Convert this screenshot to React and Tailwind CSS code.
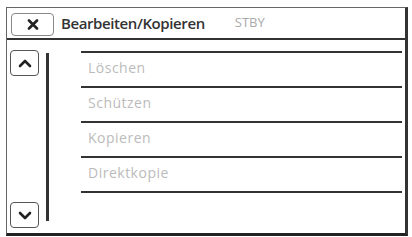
import React from 'react';

const items = ['Löschen', 'Schützen', 'Kopieren', 'Direktkopie'];

const ArrowButton = ({ dir }) => (
  <div className="w-[29px] h-[26px] border-[1.5px] border-[#555] rounded-[4px] flex items-center justify-center">
    <svg width="14" height="9" viewBox="0 0 14 9">
      <path
        d={dir === 'up' ? 'M2 7 L7 2 L12 7' : 'M2 2 L7 7 L12 2'}
        fill="none"
        stroke="#222"
        strokeWidth="2.6"
        strokeLinecap="round"
        strokeLinejoin="round"
      />
    </svg>
  </div>
);

const App = () => {
  return (
    <div className="w-[412px] h-[237px] bg-white pl-[6px] pt-[7px] font-['Open_Sans',sans-serif]">
      <div className="w-[402px] h-[229px] flex flex-col border-l border-t border-[#666] border-r-[3px] border-b-[3px] border-r-[#333] border-b-[#222]">
        <div className="h-[32px] shrink-0 flex items-center border-b-2 border-[#333]">
          <button className="ml-[4px] mt-[2px] w-[43px] h-[23px] border border-[#888] rounded-[4px] flex items-center justify-center">
            <svg width="12" height="11" viewBox="0 0 12 11">
              <path d="M2 1.5 L10 9.5 M10 1.5 L2 9.5" stroke="#222" strokeWidth="2.6" strokeLinecap="round" />
            </svg>
          </button>
          <span className="ml-[7px] text-[15px] font-semibold text-[#333] tracking-[-0.4px]">Bearbeiten/Kopieren</span>
          <span className="ml-[30px] text-[13px] text-[#aaa]">STBY</span>
        </div>
        <div className="flex-1 flex">
          <div className="pl-[3px] pt-[10px] pb-[5px] flex flex-col justify-between">
            <ArrowButton dir="up" />
            <ArrowButton dir="down" />
          </div>
          <div className="ml-[7px] mt-[13px] mb-[12px] w-[3px] bg-[#333]" />
          <div className="ml-[32px] mr-[3px] flex-1 pt-[11px]">
            <div className="border-t-2 border-[#333]">
              {items.map((item) => (
                <div key={item} className="h-[35px] border-b-2 border-[#333] flex items-center pl-[7px] pb-[4px]">
                  <span className="text-[14px] tracking-[0.5px] text-[#bbb]">{item}</span>
                </div>
              ))}
            </div>
          </div>
        </div>
      </div>
    </div>
  );
};

export default App;
